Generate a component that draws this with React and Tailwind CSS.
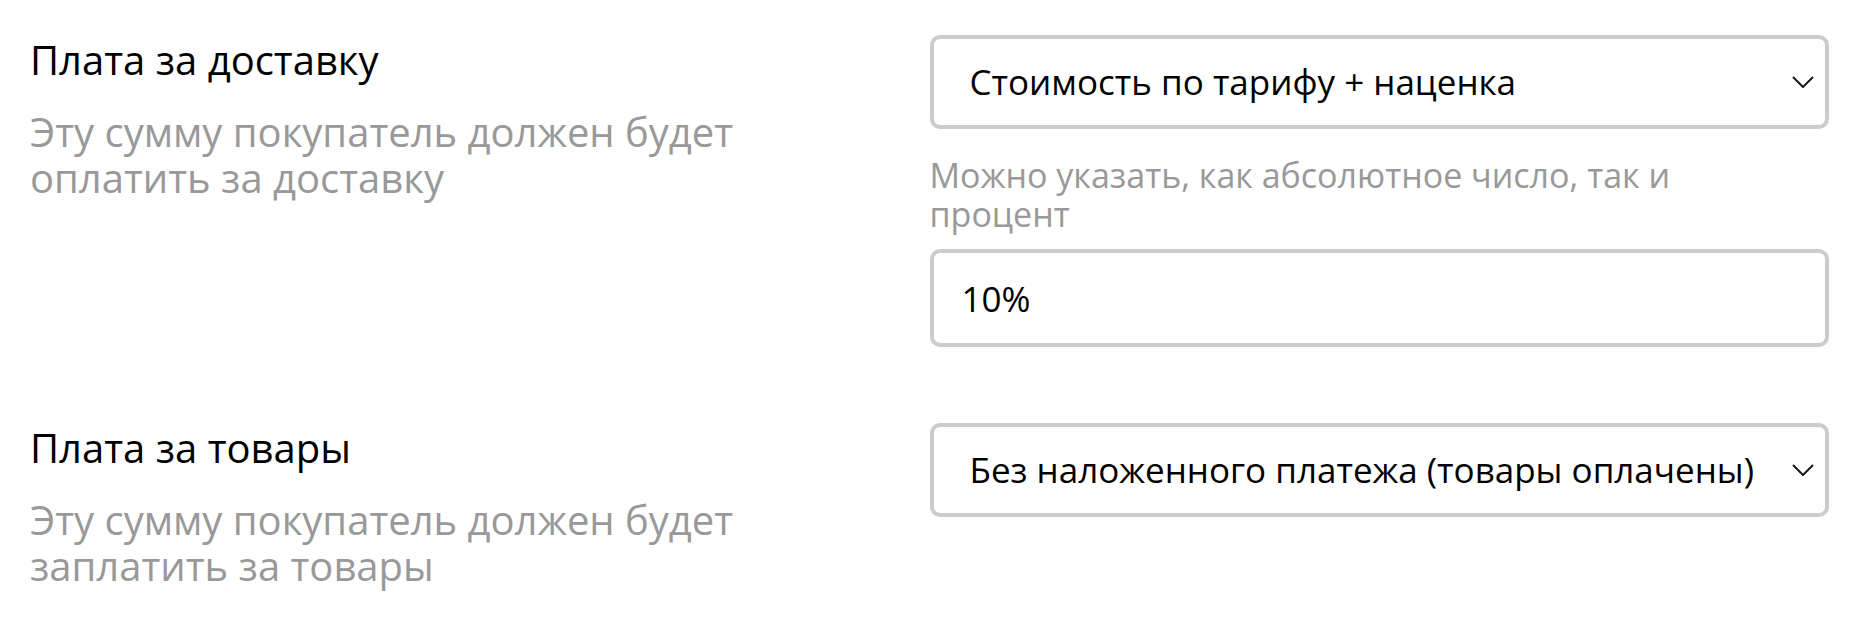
import { useState } from "react";

const font = { fontFamily: '"Open Sans", "Noto Sans", sans-serif' };

function Chevron() {
  return (
    <svg
      className="pointer-events-none absolute right-[15px] top-1/2 -translate-y-1/2"
      width="22"
      height="12"
      viewBox="0 0 22 12"
      fill="none"
    >
      <path d="M1 1l10 10L21 1" stroke="#1a1a1a" strokeWidth="2" />
    </svg>
  );
}

function SelectBox({ value, options, onChange }) {
  return (
    <div className="relative">
      <select
        value={value}
        onChange={(e) => onChange(e.target.value)}
        className="h-[94px] w-full appearance-none rounded-[10px] border-4 border-[#cccccc] bg-white pl-[36px] pr-[60px] text-[35px] text-black outline-none"
      >
        {options.map((o) => (
          <option key={o} value={o}>
            {o}
          </option>
        ))}
      </select>
      <Chevron />
    </div>
  );
}

function Row({ title, hint, children }) {
  return (
    <div className="grid grid-cols-2">
      <div className="pr-[80px]">
        <h3 className="text-[40px] font-normal leading-[49px] text-black">
          {title}
        </h3>
        <p className="mt-[25px] text-[40px] leading-[46px] text-[#999999]">
          {hint}
        </p>
      </div>
      <div className="flex flex-col">{children}</div>
    </div>
  );
}

export default function App() {
  const [delivery, setDelivery] = useState("Стоимость по тарифу + наценка");
  const [markup, setMarkup] = useState("10%");
  const [goods, setGoods] = useState(
    "Без наложенного платежа (товары оплачены)"
  );

  return (
    <div className="min-h-screen bg-white px-[30px] pt-[35px]" style={font}>
      <div className="flex flex-col gap-[76px]">
        <Row
          title="Плата за доставку"
          hint="Эту сумму покупатель должен будет оплатить за доставку"
        >
          <SelectBox
            value={delivery}
            onChange={setDelivery}
            options={[
              "Стоимость по тарифу + наценка",
              "Стоимость по тарифу",
              "Фиксированная сумма",
              "Бесплатно",
            ]}
          />
          <p className="mt-[27px] pr-[40px] text-[34px] leading-[39px] text-[#999999]">
            Можно указать, как абсолютное число, так и процент
          </p>
          <input
            value={markup}
            onChange={(e) => setMarkup(e.target.value)}
            className="mt-[15px] h-[98px] w-full rounded-[10px] border-4 border-[#cccccc] bg-white px-[28px] text-[35px] text-black outline-none"
          />
        </Row>
        <Row
          title="Плата за товары"
          hint="Эту сумму покупатель должен будет заплатить за товары"
        >
          <SelectBox
            value={goods}
            onChange={setGoods}
            options={[
              "Без наложенного платежа (товары оплачены)",
              "Наложенный платеж",
            ]}
          />
        </Row>
      </div>
    </div>
  );
}
